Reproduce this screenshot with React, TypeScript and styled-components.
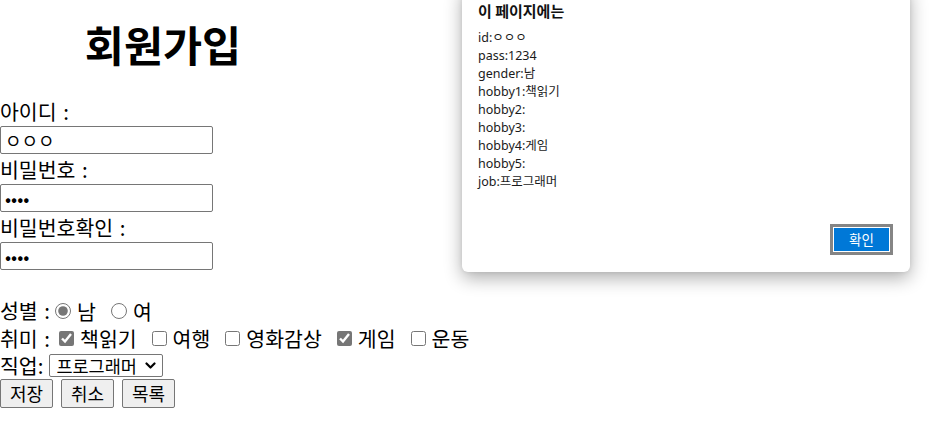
import React from "react";
import styled, { createGlobalStyle } from "styled-components";

const Global = createGlobalStyle`
  html, body { margin: 0; padding: 0; background: #fff; }
  body {
    font-family: "Noto Sans CJK KR", "Noto Sans", sans-serif;
    color: #000;
    overflow: hidden;
  }
`;

const Page = styled.div`
  position: relative;
  width: 937px;
  height: 426px;
  overflow: hidden;
`;

const Form = styled.form`
  display: flex;
  flex-direction: column;
  align-items: flex-start;
  font-size: 20.5px;
  word-spacing: 2px;
`;

const Title = styled.h1`
  width: 326px;
  margin: 20px 0 28px;
  font-size: 42.5px;
  line-height: 48px;
  font-weight: 700;
  text-align: center;
  word-spacing: 0;
`;

const FieldLabel = styled.div`
  height: 30px;
  line-height: 30px;
  white-space: nowrap;
`;

const TextInput = styled.input`
  box-sizing: border-box;
  width: 213px;
  height: 28px;
  margin: 0;
  padding: 1px 4px;
  border: 1px solid #767676;
  border-radius: 2px;
  font-family: "Noto Sans CJK KR", sans-serif;
  font-size: 18px;
  color: #000;
  background: #fff;
  outline: none;
`;

const Row = styled.div<{ $top?: number }>`
  display: flex;
  align-items: center;
  height: 27.5px;
  margin-top: ${(p) => p.$top ?? 0}px;
  white-space: nowrap;
`;

const RowLabel = styled.span`
  line-height: 27px;
`;

const Option = styled.label<{ $gap: number }>`
  display: inline-flex;
  align-items: center;
  margin-left: ${(p) => p.$gap}px;
`;

const Radio = styled.input.attrs({ type: "radio" })`
  width: 16px;
  height: 16px;
  margin: 0 6px 0 0;
  accent-color: #767676;
`;

const Check = styled.input.attrs({ type: "checkbox" })`
  width: 15px;
  height: 15px;
  margin: 0 6px 0 0;
  accent-color: #767676;
`;

const SelectWrap = styled.span`
  position: relative;
  display: inline-flex;
  margin-left: 6px;
`;

const Select = styled.select`
  box-sizing: border-box;
  width: 114px;
  height: 23px;
  margin: 0;
  padding: 0 20px 0 6px;
  border: 1px solid #767676;
  border-radius: 2px;
  appearance: none;
  -webkit-appearance: none;
  font-family: "Noto Sans CJK KR", sans-serif;
  font-size: 17.5px;
  line-height: 21px;
  color: #000;
  background: #fff;
  word-spacing: 0;
`;

const Chevron = styled.svg`
  position: absolute;
  right: 7px;
  top: 8px;
  width: 11px;
  height: 8px;
  pointer-events: none;
`;

const Buttons = styled.div`
  display: flex;
  gap: 8px;
  margin-top: -1px;
`;

const Btn = styled.button`
  box-sizing: border-box;
  width: 53px;
  height: 29px;
  padding: 0;
  border: 1px solid #767676;
  border-radius: 2px;
  background: #efefef;
  font-family: "Noto Sans CJK KR", sans-serif;
  font-size: 18px;
  color: #000;
`;

const Dialog = styled.div`
  position: absolute;
  left: 462px;
  top: -14px;
  width: 448px;
  height: 286px;
  box-sizing: border-box;
  padding: 15px 17px 17px 16px;
  display: flex;
  flex-direction: column;
  background: #fff;
  border-radius: 6px;
  box-shadow: 0 6px 18px rgba(0, 0, 0, 0.32), 0 0 4px rgba(0, 0, 0, 0.08);
  font-family: "Noto Sans", "Noto Sans CJK KR", sans-serif;
  color: #1a1a1a;
`;

const DialogTitle = styled.div`
  height: 20px;
  line-height: 20px;
  font-family: "Noto Sans CJK KR", sans-serif;
  font-size: 15px;
  font-weight: 700;
  color: #111;
`;

const DialogBody = styled.div`
  flex: 1;
  margin-top: 8px;
  font-size: 12.5px;
  line-height: 18px;
`;

const Line = styled.div`
  white-space: nowrap;
`;

const Footer = styled.div`
  display: flex;
  justify-content: flex-end;
`;

const OkButton = styled.button`
  padding: 1px;
  border: 3px solid #858585;
  background: #fff;
  cursor: pointer;
`;

const OkFace = styled.span`
  display: block;
  width: 55px;
  height: 23px;
  line-height: 23px;
  background: #0078d7;
  color: #fff;
  font-family: "Noto Sans CJK KR", sans-serif;
  font-size: 13.5px;
  text-align: center;
`;

const lines = [
  "id:ㅇㅇㅇ",
  "pass:1234",
  "gender:남",
  "hobby1:책읽기",
  "hobby2:",
  "hobby3:",
  "hobby4:게임",
  "hobby5:",
  "job:프로그래머",
];

export default function App() {
  return (
    <Page>
      <Global />
      <Form onSubmit={(e) => e.preventDefault()}>
        <Title>회원가입</Title>
        <FieldLabel>아이디 :</FieldLabel>
        <TextInput type="text" defaultValue="ㅇㅇㅇ" />
        <FieldLabel>비밀번호 :</FieldLabel>
        <TextInput type="password" defaultValue="1234" />
        <FieldLabel>비밀번호확인 :</FieldLabel>
        <TextInput type="password" defaultValue="1234" />

        <Row $top={27}>
          <RowLabel>성별 :</RowLabel>
          <Option $gap={5}>
            <Radio name="gender" defaultChecked />남
          </Option>
          <Option $gap={15}>
            <Radio name="gender" />여
          </Option>
        </Row>
        <Row>
          <RowLabel>취미 :</RowLabel>
          <Option $gap={9}>
            <Check defaultChecked />책읽기
          </Option>
          <Option $gap={15}>
            <Check />여행
          </Option>
          <Option $gap={15}>
            <Check />영화감상
          </Option>
          <Option $gap={15}>
            <Check defaultChecked />게임
          </Option>
          <Option $gap={15}>
            <Check />운동
          </Option>
        </Row>
        <Row>
          <RowLabel>직업:</RowLabel>
          <SelectWrap>
            <Select defaultValue="프로그래머">
              <option>프로그래머</option>
              <option>디자이너</option>
              <option>기획자</option>
            </Select>
            <Chevron viewBox="0 0 11 8" aria-hidden="true">
              <path
                d="M1.5 1.5 L5.5 5.5 L9.5 1.5"
                fill="none"
                stroke="#000"
                strokeWidth="2.2"
                strokeLinecap="round"
                strokeLinejoin="round"
              />
            </Chevron>
          </SelectWrap>
        </Row>
        <Buttons>
          <Btn type="button">저장</Btn>
          <Btn type="button">취소</Btn>
          <Btn type="button">목록</Btn>
        </Buttons>
      </Form>

      <Dialog role="alertdialog">
        <DialogTitle>이 페이지에는</DialogTitle>
        <DialogBody>
          {lines.map((l) => (
            <Line key={l}>{l}</Line>
          ))}
        </DialogBody>
        <Footer>
          <OkButton type="button">
            <OkFace>확인</OkFace>
          </OkButton>
        </Footer>
      </Dialog>
    </Page>
  );
}
